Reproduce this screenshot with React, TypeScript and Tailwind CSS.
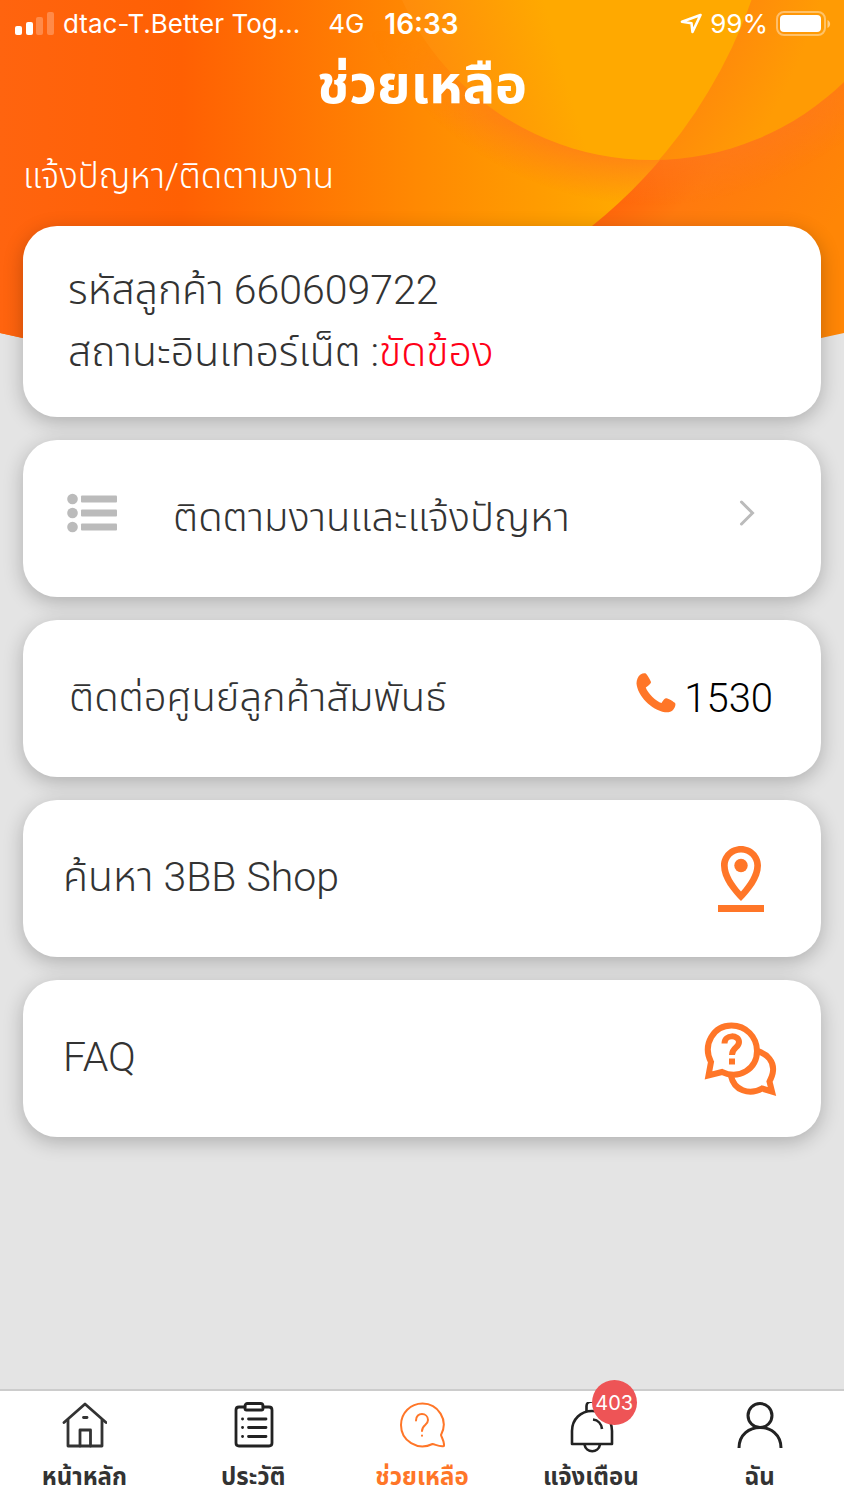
import type { ReactNode } from "react";

function HeaderArt() {
  return (
    <svg viewBox="0 0 844 390" className="absolute inset-x-0 top-0 -z-10 w-full" aria-hidden="true">
      <defs>
        <radialGradient id="base" gradientUnits="userSpaceOnUse" cx="277" cy="-167" r="680">
          <stop offset="0.73" stopColor="#ff650c" />
          <stop offset="0.81" stopColor="#ff7a0e" />
          <stop offset="1" stopColor="#ff8606" />
        </radialGradient>
        <linearGradient id="big" gradientUnits="userSpaceOnUse" x1="0" y1="0" x2="650" y2="0">
          <stop offset="0" stopColor="#ff640f" />
          <stop offset="0.28" stopColor="#ff6003" />
          <stop offset="0.65" stopColor="#ff8a02" />
          <stop offset="1" stopColor="#ffad00" />
        </linearGradient>
        <radialGradient id="shade" gradientUnits="userSpaceOnUse" cx="652" cy="-115" r="320">
          <stop offset="0.86" stopColor="#ff7a1a" stopOpacity="0.7" />
          <stop offset="1" stopColor="#ff7a1a" stopOpacity="0" />
        </radialGradient>
        <linearGradient id="fade" gradientUnits="userSpaceOnUse" x1="0" y1="30" x2="0" y2="120">
          <stop offset="0" stopColor="#fff" stopOpacity="0" />
          <stop offset="1" stopColor="#fff" />
        </linearGradient>
        <linearGradient id="small" gradientUnits="userSpaceOnUse" x1="410" y1="60" x2="550" y2="20">
          <stop offset="0" stopColor="#ff8a0c" />
          <stop offset="1" stopColor="#ffa900" />
        </linearGradient>
        <radialGradient id="overlap" gradientUnits="userSpaceOnUse" cx="277" cy="-167" r="570">
          <stop offset="0.88" stopColor="#ff8c0a" />
          <stop offset="1" stopColor="#ff9b04" />
        </radialGradient>
        <clipPath id="edge">
          <path d="M0 0H844V333Q422 430 0 333Z" />
        </clipPath>
        <clipPath id="lens">
          <circle cx="277" cy="-167" r="503" />
        </clipPath>
        <mask id="lower" maskUnits="userSpaceOnUse" x="0" y="0" width="844" height="390">
          <rect width="844" height="390" fill="url(#fade)" />
        </mask>
      </defs>
      <g clipPath="url(#edge)">
        <rect width="844" height="390" fill="url(#base)" />
        <path d="M0 0H752A503 503 0 0 1 592 226V390H0Z" fill="url(#big)" />
        <circle cx="652" cy="-115" r="320" fill="url(#shade)" mask="url(#lower)" />
        <circle cx="652" cy="-115" r="275" fill="url(#overlap)" />
        <g clipPath="url(#lens)">
          <circle cx="652" cy="-115" r="275" fill="url(#small)" />
        </g>
      </g>
    </svg>
  );
}

function SignalIcon() {
  return (
    <svg viewBox="0 0 40 24" className="h-6 w-10" fill="#fff" aria-hidden="true">
      <rect x="0" y="14" width="7" height="9" rx="2" />
      <rect x="11" y="10" width="7" height="13" rx="2" />
      <rect x="21" y="5" width="7" height="18" rx="2" opacity="0.25" />
      <rect x="32" y="0" width="7" height="23" rx="2" opacity="0.25" />
    </svg>
  );
}

function LocationArrow() {
  return (
    <svg viewBox="0 0 24 24" className="h-6 w-6" fill="none" stroke="#fff" strokeWidth="2.600" strokeLinejoin="round" aria-hidden="true">
      <path d="M22.500 3L4 9.800L13.500 11.300L14.500 20Z" />
    </svg>
  );
}

function BatteryIcon() {
  return (
    <svg viewBox="0 0 56 26" className="h-[26px] w-14" aria-hidden="true">
      <rect x="1" y="1" width="48" height="23" rx="7" fill="none" stroke="#fff" strokeOpacity="0.4" strokeWidth="2" />
      <rect x="4" y="4" width="41" height="17" rx="4" fill="#fff" />
      <path d="M51.500 9V17C55 15.500 55 10.500 51.500 9Z" fill="#fff" fillOpacity="0.5" />
    </svg>
  );
}

function ListIcon() {
  return (
    <svg viewBox="0 0 50 40" className="h-10 w-[50px]" fill="#bbb" aria-hidden="true">
      <circle cx="5.500" cy="6" r="5.300" />
      <circle cx="5.500" cy="20" r="5.300" />
      <circle cx="5.500" cy="34" r="5.300" />
      <rect x="14" y="2.500" width="36" height="7" rx="1" />
      <rect x="14" y="16.500" width="36" height="7" rx="1" />
      <rect x="14" y="30.500" width="36" height="7" rx="1" />
    </svg>
  );
}

function ChevronIcon() {
  return (
    <svg viewBox="0 0 16 26" className="h-[26px] w-4" fill="none" stroke="#bbb" strokeWidth="3" strokeLinecap="round" aria-hidden="true">
      <path d="M2.500 2L13.500 13L2.500 24" />
    </svg>
  );
}

function PhoneIcon() {
  return (
    <svg viewBox="0 0 40 40" className="h-10 w-10" fill="#ff7628" aria-hidden="true">
      <path d="M4.500 1.500C6.500 .2 8.500 -.1 9.800 .5C11.500 2 14.500 7.500 15 9C15.300 10.500 13 12 9.800 14.500C11 19.500 20.500 28.800 25.500 30C27.500 26.500 29 25 30.500 25.300C32.500 25.700 38 28.800 39.200 30.300C40 32 38.500 35.300 37 37C35.500 38.700 32 39.700 29 39.200C15 37 1.500 22.500 .5 10.500C.4 7 2 3.300 4.500 1.500Z" />
    </svg>
  );
}

function PinIcon() {
  return (
    <svg viewBox="0 0 48 66" className="h-[66px] w-12" aria-hidden="true">
      <path fill="#ff7628" fillRule="evenodd" d="M24 0C13 0 4 8.800 4 19.500C4 33 15 46 24 55C33 46 44 33 44 19.500C44 8.800 35 0 24 0ZM24 6.500C31.500 6.500 37.300 12.200 37.300 19.500C37.300 28 31 37.500 24 45.500C17 37.500 10.700 28 10.700 19.500C10.700 12.200 16.500 6.500 24 6.500Z" />
      <circle cx="24" cy="19.500" r="6.700" fill="#ff7628" />
      <rect x="1" y="59" width="46" height="7" fill="#ff7628" />
    </svg>
  );
}

function FaqIcon() {
  return (
    <svg viewBox="0 0 74 74" className="h-[74px] w-[74px]" fill="none" stroke="#ff7628" strokeWidth="6" aria-hidden="true">
      <path d="M54 29C65 32 71 40 70 49C69.700 53 68 56.500 66.500 59.500L69 69.500L59 66.500C46 74 31 68 28 54" />
      <path fill="#fff" d="M8 40C-1 22 11 3.500 28.500 3.500C43 3.500 54 15 54 29C54 47 36 58 19 50L5.500 53.500Z" />
      <path d="M21.500 21.500C21.500 12 36 12.500 36 20C36 26 29 25 29 33" strokeWidth="6" />
      <path d="M26 39.500H32" strokeWidth="6" />
    </svg>
  );
}

function HomeIcon() {
  return (
    <svg viewBox="0 0 46 46" className="h-[46px] w-[46px]" fill="none" stroke="#333" strokeWidth="2.800" strokeLinecap="round" strokeLinejoin="round" aria-hidden="true">
      <path d="M3 20.500L24 2L45 20.500" />
      <path d="M7 18V44H41V18" />
      <path d="M19 44V28H29.500V44" />
      <path d="M22.500 15.500H26" />
    </svg>
  );
}

function HistoryIcon() {
  return (
    <svg viewBox="0 0 46 46" className="h-[46px] w-[46px]" fill="none" stroke="#222" strokeWidth="2.800" strokeLinecap="round" strokeLinejoin="round" aria-hidden="true">
      <path d="M15 5H9C7 5 6 6 6 8V41C6 43 7 44 9 44H39C41 44 42 43 42 41V8C42 6 41 5 39 5H33" />
      <path d="M15 4C15 2.500 16 1.500 17.500 1.500H30.500C32 1.500 33 2.500 33 4V6.500C33 7.500 32.500 8 31.500 8H16.500C15.500 8 15 7.500 15 6.500Z" />
      <path d="M18.500 17H36M18.500 25.500H36M18.500 34.500H36M12.500 17H12.600M12.500 25.500H12.600M12.500 34.500H12.600" />
    </svg>
  );
}

function HelpIcon() {
  return (
    <svg viewBox="0 0 46 46" className="h-[46px] w-[46px]" fill="none" stroke="#ff7628" strokeWidth="2" strokeLinecap="round" strokeLinejoin="round" aria-hidden="true">
      <path d="M42 33C50 18 39 1.500 23.500 1.500C11.500 1.500 2 11 2 23C2 39 18.500 49 33.500 42C36.500 42.500 40.500 45 45 44C45.500 39.500 43 36.500 42 33Z" />
      <path d="M17 18.500C17 9.500 29 10.500 29 18C29 23.500 23 22.500 23 29" />
      <path d="M23 33.500V33.700" />
    </svg>
  );
}

function BellIcon() {
  return (
    <svg viewBox="0 0 46 52" className="h-[52px] w-[46px]" fill="none" stroke="#222" strokeWidth="2.600" strokeLinejoin="round" aria-hidden="true">
      <path d="M4 42V29C4 17 13 9 24 9S44 17 44 29V42Z" />
      <path d="M18.500 9.500V4C18.500 -2 29.500 -2 29.500 4V9.500" />
      <path d="M16.500 42.500C18 51.500 30.500 51.500 32 42.500" />
      <path d="M25 17.500C30 18 33.500 22 34 27" />
    </svg>
  );
}

function ProfileIcon() {
  return (
    <svg viewBox="0 0 46 46" className="h-[46px] w-[46px]" fill="none" stroke="#222" strokeWidth="3" aria-hidden="true">
      <circle cx="23" cy="13.500" r="12" />
      <path d="M2 46C2 18.500 44 18.500 44 46" />
    </svg>
  );
}

function MenuCard({ href, children }: { href: string; children: ReactNode }) {
  return (
    <a
      href={href}
      className="flex h-[157px] items-center justify-between rounded-[34px] bg-white shadow-[0_5px_20px_rgba(0,0,0,0.24)]"
    >
      {children}
    </a>
  );
}

const tabs = [
  { label: "หน้าหลัก", icon: <HomeIcon /> },
  { label: "ประวัติ", icon: <HistoryIcon /> },
  { label: "ช่วยเหลือ", icon: <HelpIcon />, active: true },
  { label: "แจ้งเตือน", icon: <BellIcon />, badge: 403 },
  { label: "ฉัน", icon: <ProfileIcon /> },
];

export default function App() {
  return (
    <div className="relative isolate flex min-h-screen flex-col bg-[#e4e4e4] font-[Roboto,'Noto_Sans_Thai','Noto_Sans',sans-serif] text-[#333]">
      <HeaderArt />

      {/* Status bar */}
      <div className="flex h-12 items-center justify-between pr-3 pl-[15px] font-[Inter,sans-serif] text-[26px] leading-8 text-white">
        <div className="flex items-center">
          <SignalIcon />
          <span className="ml-2">dtac-T.Better Tog...</span>
          <span className="ml-7">4G</span>
          <span className="ml-5 text-[28px] font-semibold">16:33</span>
        </div>
        <div className="flex items-center gap-2">
          <LocationArrow />
          <span>99%</span>
          <BatteryIcon />
        </div>
      </div>

      <h1 className="h-[74px] text-center text-[54px] leading-[74px] font-bold text-white">ช่วยเหลือ</h1>

      <main className="flex flex-1 flex-col gap-[23px] px-[23px] text-[40px] font-light">
        <h2 className="mt-7 text-[35px] leading-[53px] text-white">แจ้งปัญหา/ติดตามงาน</h2>

        <section className="flex h-[191px] flex-col justify-center rounded-[34px] bg-white px-[45px] pb-0.5 text-[41px] leading-[62px] shadow-[0_5px_20px_rgba(0,0,0,0.24)]">
          <p>รหัสลูกค้า 660609722</p>
          <p>
            สถานะอินเทอร์เน็ต :<span className="text-[#ff0018]">ขัดข้อง</span>
          </p>
        </section>

        <MenuCard href="#tracking">
          <span className="flex items-center gap-14 pl-11">
            <span className="pb-3">
              <ListIcon />
            </span>
            <span className="pb-0.5">ติดตามงานและแจ้งปัญหา</span>
          </span>
          <span className="pr-[66px] pb-3">
            <ChevronIcon />
          </span>
        </MenuCard>

        <MenuCard href="tel:1530">
          <span className="pb-0.5 pl-[46px]">ติดต่อศูนย์ลูกค้าสัมพันธ์</span>
          <span className="flex items-center gap-2 pr-12 text-black">
            <span className="pb-3">
              <PhoneIcon />
            </span>
            1530
          </span>
        </MenuCard>

        <MenuCard href="#shop">
          <span className="pb-0.5 pl-10 text-[41px]">ค้นหา 3BB Shop</span>
          <span className="pr-14">
            <PinIcon />
          </span>
        </MenuCard>

        <MenuCard href="#faq">
          <span className="pb-0.5 pl-10 text-[41px]">FAQ</span>
          <span className="pr-11">
            <FaqIcon />
          </span>
        </MenuCard>
      </main>

      <nav className="grid h-[111px] grid-cols-5 border-t-2 border-[#ccc] bg-white">
        {tabs.map((tab) => (
          <button
            key={tab.label}
            type="button"
            className={`flex flex-col items-center pt-[11px] text-[24px] font-bold ${tab.active ? "text-[#ff7628]" : "text-[#333]"}`}
          >
            <span className="relative h-[46px]">
              {tab.icon}
              {tab.badge && (
                <span className="absolute -top-[22px] left-6 flex h-[45px] w-[45px] items-center justify-center rounded-full bg-[#ee5456] font-[Inter,sans-serif] text-[20px] font-normal text-white">
                  {tab.badge}
                </span>
              )}
            </span>
            <span className="mt-[11px] leading-9">{tab.label}</span>
          </button>
        ))}
      </nav>
    </div>
  );
}
